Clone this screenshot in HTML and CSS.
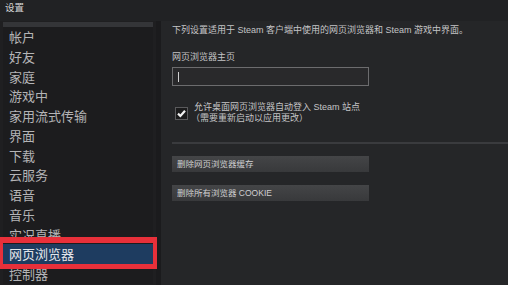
FILE: index.html
```html
<!DOCTYPE html>
<html lang="zh-CN">
<head>
<meta charset="utf-8">
<title>设置</title>
<link rel="stylesheet" href="styles.css">
</head>
<body>
<div class="window">
  <div class="titlebar">设置</div>
  <div class="main">
    <nav class="sidebar">
      <div class="strip"></div>
      <ul class="menu">
        <li>帐户</li>
        <li>好友</li>
        <li>家庭</li>
        <li>游戏中</li>
        <li>家用流式传输</li>
        <li>界面</li>
        <li>下载</li>
        <li>云服务</li>
        <li>语音</li>
        <li>音乐</li>
        <li>实况直播</li>
        <li class="active">网页浏览器</li>
        <li>控制器</li>
      </ul>
    </nav>
    <div class="gap"></div>
    <section class="content">
      <p class="intro">下列设置适用于 Steam 客户端中使用的网页浏览器和 Steam 游戏中界面。</p>
      <div class="label">网页浏览器主页</div>
      <div class="input"><span class="caret"></span></div>
      <div class="check-row">
        <svg class="checkbox" width="13" height="13" viewBox="0 0 13 13">
          <rect x="0.5" y="0.5" width="12" height="12" fill="#1b1b1c" stroke="#5a5a5c"/>
          <path d="M3 6.6 L5.4 9 L10 3.8" fill="none" stroke="#f2f2f2" stroke-width="2.2"/>
        </svg>
        <div class="check-text">
          <div>允许桌面网页浏览器自动登入 Steam 站点</div>
          <div>（需要重新启动以应用更改）</div>
        </div>
      </div>
      <div class="separator"></div>
      <div class="button first">删除网页浏览器缓存</div>
      <div class="button">删除所有浏览器 COOKIE</div>
    </section>
  </div>
</div>
</body>
</html>
```

FILE: styles.css
```css
* { box-sizing: border-box; }
html, body { margin: 0; padding: 0; }
body {
  width: 508px;
  height: 285px;
  overflow: hidden;
  background: #252628;
  font-family: "Liberation Sans", "Noto Sans CJK SC", sans-serif;
}
.window {
  width: 508px;
  height: 285px;
  display: flex;
  flex-direction: column;
}
.titlebar {
  height: 21px;
  flex: none;
  background: #212224;
  color: #d4d4d4;
  font-size: 9.5px;
  line-height: 14px;
  padding-left: 5px;
  padding-top: 1px;
}
.main {
  flex: 1;
  display: flex;
  min-height: 0;
}
.sidebar {
  width: 156px;
  flex: none;
  padding-left: 3px;
  background: #1f1f21;
  position: relative;
}
.strip {
  height: 5px;
  margin-top: 1px;
  margin-right: 3px;
  background: #343538;
}
.menu {
  list-style: none;
  margin: 0;
  padding: 0;
  background: #1c1c1e;
  margin-right: 3px;
}
.menu li {
  height: 19.75px;
  line-height: 19.75px;
  font-size: 13px;
  color: #b4b4b6;
  padding-left: 6px;
  font-family: "Noto Sans CJK SC", sans-serif;
  white-space: nowrap;
}
.menu li.active {
  background: #1e3c60;
  color: #e4e6ea;
  position: relative;
}
.menu li.active::after {
  content: "";
  position: absolute;
  left: -3px;
  right: -4px;
  top: -7px;
  bottom: -5px;
  border: solid #e8303a;
  border-width: 6px 4px 5px 3px;
}
.gap {
  width: 5px;
  flex: none;
  background: #1b1b1d;
}
.content {
  flex: 1;
  padding: 3px 0 0 11px;
  color: #c4c4c6;
  font-size: 9px;
}
.intro {
  margin: 0;
  line-height: 12px;
  white-space: nowrap;
}
.label {
  margin-top: 15px;
  line-height: 12px;
}
.input {
  margin-top: 4px;
  width: 197px;
  height: 19px;
  border: 1px solid #6c6c6e;
  background: #29292b;
  padding: 4px 0 0 5px;
}
.caret {
  display: block;
  width: 1px;
  height: 10px;
  background: #d0d0d0;
}
.check-row {
  margin-top: 16px;
  display: flex;
  align-items: flex-start;
}
.checkbox {
  margin-left: 3px;
  margin-top: 5px;
  flex: none;
}
.check-text {
  margin-left: 6px;
  line-height: 10.5px;
}
.check-text div:last-child {
  margin-left: -3px;
}
.separator {
  margin-top: 19px;
  height: 2px;
  background: #3a3b3e;
}
.button {
  width: 197px;
  height: 16px;
  margin-top: 13px;
  background: linear-gradient(#444547, #38393b);
  color: #cfcfd1;
  font-size: 8.5px;
  line-height: 16px;
  padding-left: 5px;
  white-space: nowrap;
}
.button.first {
  margin-top: 12px;
}
```
